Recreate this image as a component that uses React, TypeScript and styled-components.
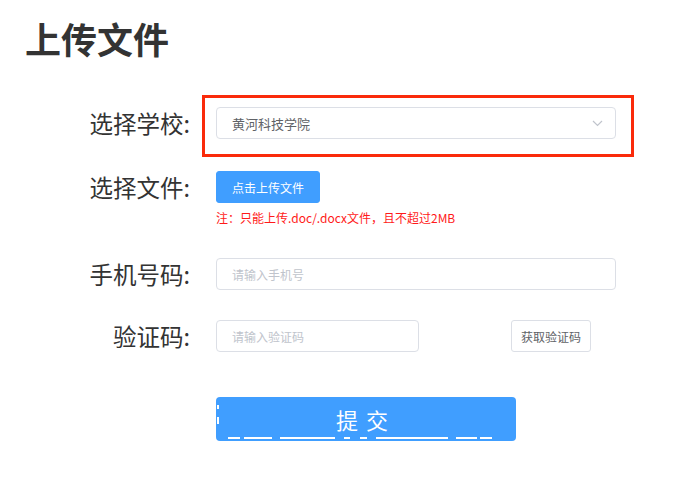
import React from 'react'
import styled, { createGlobalStyle } from 'styled-components'

const GlobalStyle = createGlobalStyle`
  body {
    margin: 0;
    background: #FFFFFF;
    font-family: 'Noto Sans CJK SC', 'Liberation Sans', sans-serif;
  }
`

const Page = styled.div`
  width: 700px;
  height: 480px;
  padding-left: 25px;
  box-sizing: border-box;
`

const Title = styled.h1`
  margin: 0;
  padding-top: 14px;
  font-size: 36px;
  line-height: 48px;
  font-weight: 700;
  color: #333333;
`

const Form = styled.div`
  display: flex;
  flex-direction: column;
  margin-left: -25px;
  padding-top: 45px;
`

const Row = styled.div<{ $gap?: number }>`
  display: flex;
  align-items: flex-start;
  gap: 26px;
  margin-bottom: ${p => p.$gap ?? 0}px;
`

const Label = styled.label`
  width: 190px;
  height: 32px;
  line-height: 32px;
  text-align: right;
  font-size: 23.5px;
  color: #333333;
  flex-shrink: 0;
`

const Spacer = styled.div`
  width: 190px;
  flex-shrink: 0;
`

const Highlight = styled.div`
  margin: -12px -18px -18px -14px;
  padding: 9px 15px 15px 11px;
  border: 3px solid #fa2a0a;
`

const Select = styled.div`
  width: 400px;
  height: 32px;
  box-sizing: border-box;
  border: 1px solid #dcdfe6;
  border-radius: 4px;
  display: flex;
  align-items: center;
  justify-content: space-between;
  padding: 0 12px 0 15px;
  font-size: 13px;
  color: #606266;
`

const Input = styled.input<{ $width: number }>`
  width: ${p => p.$width}px;
  height: 32px;
  box-sizing: border-box;
  border: 1px solid #dcdfe6;
  border-radius: 4px;
  padding: 0 15px;
  font-family: inherit;
  font-size: 12px;
  color: #606266;
  outline: none;

  &::placeholder {
    color: #c0c4cc;
  }
`

const Column = styled.div`
  display: flex;
  flex-direction: column;
  align-items: flex-start;
`

const Button = styled.button<{ $primary?: boolean }>`
  height: 32px;
  box-sizing: border-box;
  padding: 0 15px;
  border-radius: 3px;
  font-family: inherit;
  font-size: 12px;
  cursor: pointer;
  border: 1px solid ${p => (p.$primary ? '#409eff' : '#dcdfe6')};
  background: ${p => (p.$primary ? '#409eff' : '#ffffff')};
  color: ${p => (p.$primary ? '#ffffff' : '#606266')};
`

const CodeButton = styled(Button)`
  padding: 0 9px;
  margin-left: 66px;
`

const Note = styled.div`
  margin-top: 7px;
  font-size: 12px;
  line-height: 16px;
  color: #ff1a1a;
`

const Submit = styled.button`
  position: relative;
  width: 300px;
  height: 44px;
  border: none;
  border-radius: 4px;
  background: #409eff;
  color: #ffffff;
  font-family: inherit;
  font-size: 22px;
  letter-spacing: 8px;
  padding: 0;
  cursor: pointer;
`

const Glitch = styled.svg`
  position: absolute;
  left: 0;
  top: 0;
  pointer-events: none;
`

const dashes: [number, number][] = [
  [228, 240], [244, 272], [280, 335], [344, 350],
  [360, 367], [376, 448], [456, 477], [480, 492],
]

const Chevron = () => (
  <svg width="11" height="7" viewBox="0 0 11 7">
    <path d="M1 1 L5.5 5.5 L10 1" fill="none" stroke="#c0c4cc" strokeWidth="1.2" />
  </svg>
)

const App: React.FC = () => {
  return (
    <Page>
      <GlobalStyle />
      <Title>上传文件</Title>
      <Form>
        <Row $gap={32}>
          <Label>选择学校:</Label>
          <Highlight>
            <Select>
              <span>黄河科技学院</span>
              <Chevron />
            </Select>
          </Highlight>
        </Row>
        <Row $gap={32}>
          <Label>选择文件:</Label>
          <Column>
            <Button $primary>点击上传文件</Button>
            <Note>注：只能上传.doc/.docx文件，且不超过2MB</Note>
          </Column>
        </Row>
        <Row $gap={30}>
          <Label>手机号码:</Label>
          <Input $width={400} placeholder="请输入手机号" />
        </Row>
        <Row $gap={45}>
          <Label>验证码:</Label>
          <Input $width={203} placeholder="请输入验证码" />
          <CodeButton>获取验证码</CodeButton>
        </Row>
        <Row>
          <Spacer />
          <Submit>
            提交
            <Glitch width="300" height="44">
              <rect x="1" y="8" width="2" height="4" fill="#ffffff" />
              <rect x="1" y="20" width="2" height="7" fill="#ffffff" />
              {dashes.map(([a, b]) => (
                <rect key={a} x={a - 216} y="40" width={b - a} height="2" fill="#ffffff" />
              ))}
            </Glitch>
          </Submit>
        </Row>
      </Form>
    </Page>
  )
}

export default App
